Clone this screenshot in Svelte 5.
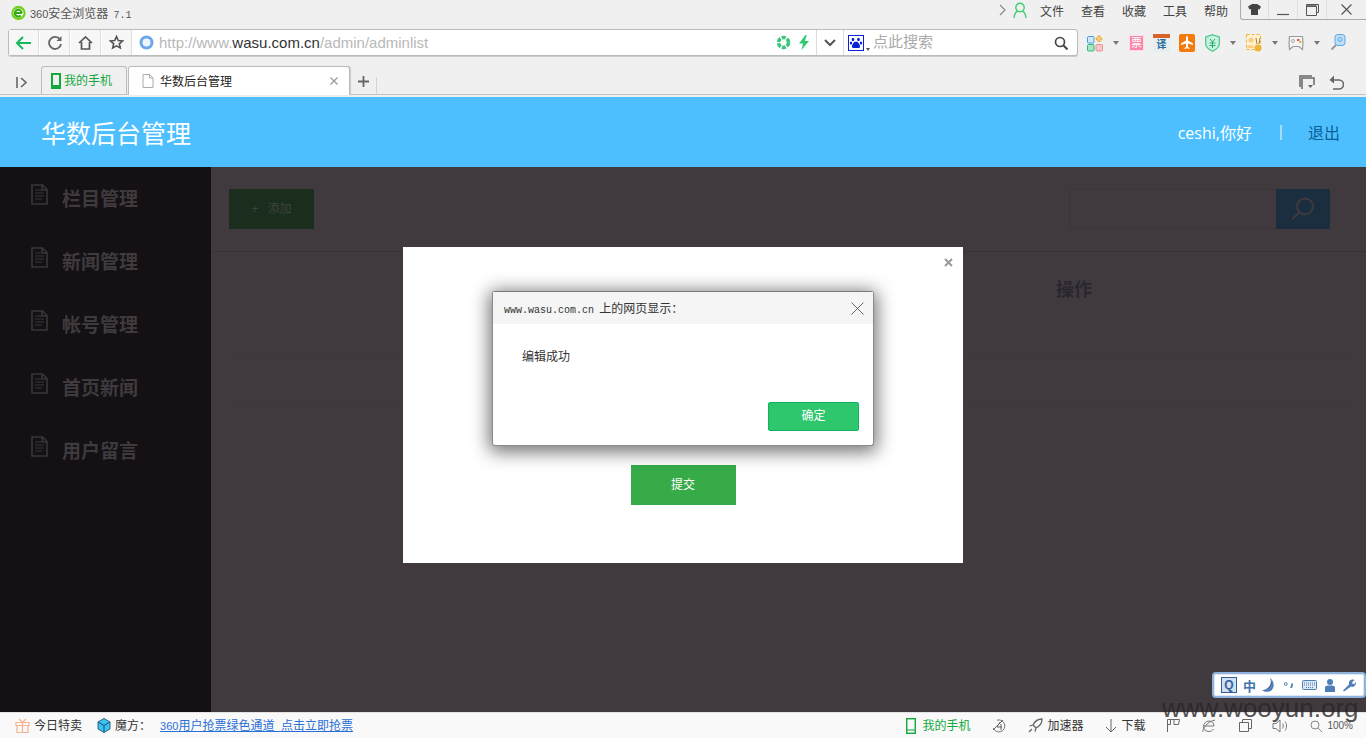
<script>
	const menus = ['文件', '查看', '收藏', '工具', '帮助'];
	const nav = ['栏目管理', '新闻管理', '帐号管理', '首页新闻', '用户留言'];
</script>

<div class="page">
	<div class="chrome">
		<div class="titlebar">
			<div class="brand">
				<svg width="15" height="16" viewBox="0 0 15 16">
					<circle cx="7.500" cy="8" r="7.200" fill="#74d01e" />
					<ellipse cx="7.500" cy="8" rx="5" ry="4.600" fill="#fff" />
					<path d="M3.800 8h7.200M10.800 8a3.500 3.300 0 1 0-1 2.500" fill="none" stroke="#35a814" stroke-width="2" />
				</svg>
				<span class="brand-name"><span class="num">360</span>安全浏览器<span class="latin ver">7.1</span></span>
			</div>
			<div class="menu">
				<svg class="more" width="7" height="12" viewBox="0 0 7 12"><path d="M1 1l5 5-5 5" fill="none" stroke="#888" stroke-width="1.200" /></svg>
				<svg class="user" width="14" height="17" viewBox="0 0 14 17">
					<circle cx="7" cy="5.500" r="4.200" fill="none" stroke="#3fcf72" stroke-width="1.400" />
					<path d="M1 16c.4-4 2.500-6.500 4-7M13 16c-.4-4-2.500-6.500-4-7" fill="none" stroke="#3fcf72" stroke-width="1.400" />
				</svg>
				{#each menus as m}
					<span class="menu-item">{m}</span>
				{/each}
				<div class="winbtns">
					<div class="wb w-shirt">
						<svg width="13" height="11" viewBox="0 0 13 11"><path d="M4 0h5l4 2.500-1.500 3L10 5v6H3V5l-1.500.5L0 2.500z" fill="#444" /></svg>
					</div>
					<div class="wb w-next"><svg width="12" height="12" viewBox="0 0 12 12"><path d="M0 10.500h12" stroke="#555" stroke-width="1.200" /></svg></div>
					<div class="wb w-next"><svg width="13" height="12" viewBox="0 0 13 12"><path d="M.5 2.500h10v9H.5zM.5 2.500V.5h12v8h-2" fill="none" stroke="#555" /><path d="M.5 2h10" stroke="#555" stroke-width="1.500" /></svg></div>
					<div class="wb w-close"><svg width="11" height="11" viewBox="0 0 11 11"><path d="M.5.500l10 10M10.500.5l-10 10" stroke="#555" stroke-width="1.200" /></svg></div>
				</div>
			</div>
		</div>

		<div class="navrow">
			<div class="addr">
				<div class="seg">
					<svg width="17" height="14" viewBox="0 0 17 14"><path d="M16 7H2M8 1L2 7l6 6" fill="none" stroke="#16b95a" stroke-width="2" /></svg>
				</div>
				<div class="seg">
					<svg width="14" height="14" viewBox="0 0 14 14"><path d="M12 3.500A6 6 0 1 0 13 8" fill="none" stroke="#666" stroke-width="1.800" /><path d="M13.500 0v5h-5z" fill="#666" /></svg>
				</div>
				<div class="seg">
					<svg width="15" height="14" viewBox="0 0 15 14"><path d="M1 7l6.500-6L14 7M3.500 6v7h8V6" fill="none" stroke="#555" stroke-width="1.700" /></svg>
				</div>
				<div class="seg">
					<svg width="15" height="15" viewBox="0 0 15 15"><path d="M7.500 1.500l1.800 4 4.300.400-3.300 2.900 1 4.200-3.800-2.200-3.800 2.200 1-4.200L1.400 5.900l4.300-.4z" fill="none" stroke="#555" stroke-width="1.600" /></svg>
				</div>
				<svg class="globe" width="15" height="15" viewBox="0 0 15 15"><circle cx="7.500" cy="7.500" r="5.500" fill="#eef6ff" stroke="#6ba8ea" stroke-width="3" /></svg>
				<div class="url">http://www.<b>wasu.com.cn</b>/admin/adminlist</div>
				<svg class="speed" width="15" height="15" viewBox="0 0 15 15"><circle cx="7.500" cy="7.500" r="5" fill="none" stroke="#3cc47c" stroke-width="3.600" stroke-dasharray="4 1.300" /></svg>
				<svg class="bolt" width="12" height="15" viewBox="0 0 12 15"><path d="M7.500 0L1 8.500h4L3.500 15 11 6H6.800L8.800 0z" fill="#2dcb6e" /></svg>
				<div class="drop">
					<svg width="12" height="8" viewBox="0 0 12 8"><path d="M1 1l5 5 5-5" fill="none" stroke="#555" stroke-width="2" /></svg>
				</div>
				<div class="paw">
					<svg width="16" height="16" viewBox="0 0 16 16">
						<rect x=".5" y=".5" width="15" height="15" fill="#fff" stroke="#0a1fd8" />
						<ellipse cx="5" cy="4.500" rx="1.300" ry="1.800" fill="#0a1fd8" />
						<ellipse cx="10.500" cy="4.500" rx="1.300" ry="1.800" fill="#0a1fd8" />
						<ellipse cx="3" cy="8" rx="1.200" ry="1.600" fill="#0a1fd8" />
						<ellipse cx="13" cy="8" rx="1.200" ry="1.600" fill="#0a1fd8" />
						<path d="M8 6.500c2 0 4.500 3.500 4 5.500-.5 1.500-2.500 1-4 1s-3.500.5-4-1c-.5-2 2-5.500 4-5.500z" fill="#0a1fd8" />
					</svg>
					<i class="caret small"></i>
				</div>
				<div class="engine">点此搜索</div>
				<svg class="find" width="14" height="14" viewBox="0 0 14 14"><circle cx="6" cy="6" r="4.500" fill="none" stroke="#444" stroke-width="1.700" /><path d="M9.500 9.500l4 4" stroke="#444" stroke-width="2" /></svg>
			</div>
			<div class="tools">
				<svg width="16" height="18" viewBox="0 0 16 18">
					<rect x=".5" y="2.500" width="6.500" height="6.500" rx="1" fill="#cfe6fb" stroke="#4a9be0" />
					<rect x=".5" y="10.500" width="6.500" height="6.500" rx="1" fill="#a5e8c6" stroke="#37b77d" />
					<rect x="9" y="10.500" width="6.500" height="6.500" rx="1" fill="#fbc8c8" stroke="#e88f8f" />
					<path d="M12 1.500v6.500M8.800 4.800h6.400" stroke="#f0a92c" stroke-width="2.800" />
					<path d="M12 2.500v4.500M9.800 4.800h4.400" stroke="#fde2ad" />
				</svg>
				<i class="caret"></i>
				<div class="ticket">票</div>
				<div class="trans"><span>译</span></div>
				<div class="plane">
					<svg width="16" height="17" viewBox="0 0 16 17"><path d="M8 2c.8 0 1 1 1 2v2.500l5 3v1.500l-5-1.500V13l1.500 1v1L8 14.300 5.500 15v-1L7 13V9.500L2 11V9.500l5-3V4c0-1 .2-2 1-2z" fill="#fff" /></svg>
				</div>
				<svg width="15" height="18" viewBox="0 0 15 18">
					<path d="M7.500.7L14.300 3v6.500c0 3.500-3.500 6.200-6.800 7.800C4.200 15.700.7 13 .7 9.500V3z" fill="#c7f2de" stroke="#45c58c" stroke-width="1.200" />
					<path d="M5 5l2.500 3L10 5M4.500 9h6M4.500 11.500h6M7.500 8v6" fill="none" stroke="#2aa76d" />
				</svg>
				<i class="caret"></i>
				<div class="photo">
					<svg width="16" height="18" viewBox="0 0 16 18">
						<rect x=".5" y=".5" width="14" height="15" fill="#fff0cf" stroke="#eeb33a" stroke-dasharray="3 2" />
						<circle cx="5" cy="6" r="2.500" fill="#f6cf82" />
						<path d="M1 14c1-4 6-4 7 0z" fill="#f6cf82" />
						<path d="M10 4l1 6M14 4l-1 6" stroke="#a9812c" />
						<circle cx="12" cy="14" r="3.500" fill="#eeb33a" />
					</svg>
				</div>
				<i class="caret"></i>
				<svg width="16" height="17" viewBox="0 0 16 17">
					<path d="M1.500 2.500h13c.6 4 .6 8 0 13l-3.500-3H5l-3.500 3c-.6-5-.6-9 0-13z" fill="#f4f4f4" stroke="#9a9a9a" stroke-width="1.200" />
					<circle cx="5" cy="7" r="1.500" fill="none" stroke="#aaa" />
					<rect x="9" y="5" width="2.500" height="2" fill="#e6584c" />
					<rect x="11" y="7" width="2.500" height="2" fill="#efb73a" />
				</svg>
				<i class="caret"></i>
				<svg width="16" height="17" viewBox="0 0 16 17">
					<rect x="5" y=".5" width="10" height="11" rx="3" fill="#bfe0fa" stroke="#5ea7e0" />
					<circle cx="10" cy="5.500" r="2" fill="none" stroke="#5ea7e0" />
					<path d="M6 11l-4.500 4.500" stroke="#9a9a9a" stroke-width="2" />
				</svg>
			</div>
		</div>

		<div class="tabrow">
			<svg class="sidebtn" width="11" height="11" viewBox="0 0 11 11"><path d="M1 0v11" stroke="#666" stroke-width="1.600" /><path d="M5 1l5 4.500L5 10" fill="none" stroke="#666" stroke-width="1.600" /></svg>
			<div class="tab phone">
				<svg width="10" height="16" viewBox="0 0 10 16"><rect x="1" y="1" width="8" height="14" fill="none" stroke="#12a83c" stroke-width="2" /><rect x="2" y="12" width="6" height="3" fill="#12a83c" /></svg>
				<span class="tab-label">我的手机</span>
			</div>
			<div class="tab current">
				<svg width="12" height="14" viewBox="0 0 12 14"><path d="M1 .5h6.500L11 4v9.500H1zM7.500.5V4H11" fill="#fff" stroke="#aaa" /></svg>
				<span class="tab-label tab-name">华数后台管理</span>
				<svg class="tab-x" width="8" height="8" viewBox="0 0 8 8"><path d="M.5.500l7 7M7.500.5l-7 7" stroke="#999" stroke-width="1.200" /></svg>
			</div>
			<svg class="newtab" width="11" height="11" viewBox="0 0 11 11"><path d="M5.500 0v11M0 5.500h11" stroke="#666" stroke-width="1.800" /></svg>
			<div class="tabend"></div>
			<div class="tab-tools">
				<svg width="16" height="15" viewBox="0 0 16 15"><path d="M1 12V1h12M3 14V3h12v7" fill="none" stroke="#666" stroke-width="1.500" /><path d="M9 10l2.500 3 2.500-3z" fill="#666" /></svg>
				<svg width="15" height="15" viewBox="0 0 15 15"><path d="M3 5h7a4 4 0 0 1 0 9H4" fill="none" stroke="#666" stroke-width="1.600" /><path d="M5 .5v8L.5 5z" fill="#666" /></svg>
			</div>
		</div>
	</div>

	<header class="top">
		<div class="logo">华数后台管理</div>
		<div class="account">
			<span class="hello">ceshi,你好</span>
			<i class="sep"></i>
			<a class="logout" href="#out">退出</a>
		</div>
	</header>

	<div class="body">
		<aside class="side">
			{#each nav as item}
				<div class="side-item">
					<svg width="17" height="21" viewBox="0 0 17 21">
						<path d="M1 1h10.500L16 5.500V20H1zM11 1v5h5" fill="none" stroke="#3a3538" stroke-width="1.600" />
						<path d="M4 6h6M4 9h9M4 12h9M4 15h7" stroke="#3a3538" stroke-width="1.200" />
					</svg>
					<span>{item}</span>
				</div>
			{/each}
		</aside>
		<main class="main">
			<div class="bar">
				<div class="add"><span class="plus">+</span><span class="add-label">添加</span></div>
				<div class="search">
					<div class="search-input"></div>
					<div class="search-btn">
						<svg width="24" height="24" viewBox="0 0 24 24"><circle cx="14" cy="9.500" r="8" fill="none" stroke="#3f3a3e" stroke-width="2" /><path d="M7.500 16L1.500 22" stroke="#3f3a3e" stroke-width="2" /></svg>
					</div>
				</div>
			</div>
			<div class="table">
				<div class="thead"><span>操作</span></div>
				<div class="row"></div>
			</div>
		</main>
	</div>

	<footer class="status">
		<div class="status-left">
			<div class="st">
				<svg width="15" height="15" viewBox="0 0 15 15"><path d="M1 4.500h13v3H1zM2 7.500h11v7H2zM7.500 4.500v10M4 1l3.500 3.500L11 1" fill="none" stroke="#f5b48f" stroke-width="1.200" /></svg>
				<span class="st-label">今日特卖</span>
			</div>
			<div class="st cube">
				<svg width="14" height="15" viewBox="0 0 14 15"><path d="M7 .5l6 3.500v7l-6 3.500L1 11V4z" fill="#3cc3f5" stroke="#33617d" /><path d="M1 4l6 3.500L13 4M7 7.500v7" fill="none" stroke="#17526f" /></svg>
				<span class="st-label">魔方：</span>
			</div>
			<a class="promo st-label" href="#promo"><span class="num">360</span>用户抢票绿色通道&nbsp;&nbsp;点击立即抢票</a>
		</div>
		<div class="status-right">
			<div class="st green">
				<svg width="10" height="16" viewBox="0 0 10 16"><rect x=".7" y=".7" width="8.600" height="14.600" fill="none" stroke="#12a83c" stroke-width="1.400" /><path d="M1 12h8" stroke="#12a83c" /></svg>
				<span class="st-label">我的手机</span>
			</div>
			<svg class="s-ac" width="14" height="14" viewBox="0 0 14 14"><path d="M5 1.200A6 6 0 1 1 1.200 9" fill="none" stroke="#777" /><path d="M1 11L11 1M8 3L5 8h5M9 5v6" fill="none" stroke="#666" /></svg>
			<div class="st s-boost">
				<svg width="15" height="15" viewBox="0 0 15 15"><path d="M14 1c-4 0-7 2-9 6l3 3c4-2 6-5 6-9zM5 7L1.500 8M8 10l-1 3.500M4 11l-3 3" fill="none" stroke="#666" stroke-width="1.300" /></svg>
				<span class="st-label">加速器</span>
			</div>
			<div class="st s-down">
				<svg width="12" height="14" viewBox="0 0 12 14"><path d="M6 0v13M1 8l5 5 5-5" fill="none" stroke="#666" /></svg>
				<span class="st-label">下载</span>
			</div>
			<svg class="s-flag" width="13" height="13" viewBox="0 0 13 13"><path d="M.5 13V.5h12l-1 5H7V.5M3.500.5v5H.5" fill="none" stroke="#666" /></svg>
			<svg class="s-e" width="14" height="14" viewBox="0 0 14 14"><path d="M2 7h10c0-3-2-5-5-5S1.500 4.500 1.500 7.500 4 12.500 7 12.500c2 0 3.500-1 4.500-2.500M1 13C0 11 4 3 13 1" fill="none" stroke="#777" /></svg>
			<svg class="s-win" width="13" height="13" viewBox="0 0 13 13"><path d="M3.500 3.500V.5h9v9h-3M.5 3.500h9v9h-9z" fill="none" stroke="#666" /></svg>
			<svg class="s-snd" width="16" height="14" viewBox="0 0 16 14"><path d="M1 4.500h3L8 1v12L4 9.500H1zM10.500 4.500c1 1.500 1 3.500 0 5M13 2.500c2 2.500 2 6.500 0 9" fill="none" stroke="#777" /></svg>
			<svg class="s-zoom" width="12" height="12" viewBox="0 0 12 12"><circle cx="5" cy="5" r="4" fill="none" stroke="#888" /><path d="M8 8l4 4" stroke="#888" /></svg>
			<span class="s-pct">100%</span>
		</div>
	</footer>

	<div class="modal">
		<svg class="modal-x" width="9" height="9" viewBox="0 0 9 9"><path d="M1 1l7 7M8 1L1 8" stroke="#999" stroke-width="2" /></svg>
		<div class="submit">提交</div>
	</div>

	<div class="alert">
		<div class="alert-head">
			<span class="alert-title"><span class="latin">www.wasu.com.cn</span> 上的网页显示：</span>
			<svg width="13" height="13" viewBox="0 0 13 13"><path d="M.5.500l12 12M12.500.5l-12 12" stroke="#666" /></svg>
		</div>
		<div class="alert-msg">编辑成功</div>
		<div class="alert-foot"><div class="ok">确定</div></div>
	</div>

	<div class="ime">
		<div class="ime-q">Q</div>
		<span class="ime-zh">中</span>
		<svg width="14" height="14" viewBox="0 0 14 14"><path d="M8 0c3 3 3 9-1 11-2 1-5 1-7 1 2 2 5 2 7 1.500 5-1 7-9 1-13.500z" fill="#4e7fb5" /><path d="M8 0c3 3 3 9-1 11-2 1-4 1.500-7 1 5 0 11-5 8-12z" fill="#3f6fa6" /></svg>
		<svg width="10" height="8" viewBox="0 0 10 8"><circle cx="1.800" cy="3" r="1.400" fill="none" stroke="#5585b8" /><path d="M8 2.500v2L7 7" fill="none" stroke="#4e7fb5" stroke-width="1.800" /></svg>
		<svg width="15" height="10" viewBox="0 0 15 10"><rect x=".5" y=".5" width="14" height="9" rx="1" fill="#dbe7f4" stroke="#4e7fb5" /><path d="M2 3h11M2 5h11M4 7.500h7" stroke="#4e7fb5" stroke-dasharray="1 1" /></svg>
		<svg width="10" height="13" viewBox="0 0 10 13"><circle cx="5" cy="3" r="3" fill="#4e7fb5" /><path d="M0 13V8.500C0 7 1.500 6.500 5 6.500s5 .5 5 2V13z" fill="#4e7fb5" /></svg>
		<svg width="13" height="13" viewBox="0 0 13 13"><path d="M1 12.500L0 11.500l6-6C5.500 3 6.500 1 9 .5c1 0 2 0 2.500.5L9 3.300l.7 1.500 1.500.5L13 3c.3 2-1 4.500-3 4.800-1 .2-1.500 0-2-.3z" fill="#4e7fb5" /></svg>
	</div>

	<div class="mark">www.wooyun.org</div>
</div>

<style>
	:global(body) {
		margin: 0;
	}

	.page {
		position: relative;
		width: 1366px;
		height: 738px;
		overflow: hidden;
		display: flex;
		flex-direction: column;
		font-family: 'Liberation Sans', 'Noto Sans CJK SC', sans-serif;
		font-size: 12px;
		color: #333;
		background: #403a3e;
	}

	/* the browser draws latin at half the width of its 12px hanzi */
	.latin {
		font-family: 'Liberation Mono', monospace;
		font-size: 10px;
	}

	.num {
		font-size: 11px;
	}

	.chrome {
		height: 97px;
		flex: none;
		background: #f0f0f0;
		display: flex;
		flex-direction: column;
	}

	.titlebar {
		height: 29px;
		display: flex;
		justify-content: space-between;
		align-items: flex-start;
	}

	.brand {
		display: flex;
		align-items: center;
		height: 26px;
		padding-left: 11px;
		color: #555;
	}

	.brand svg {
		margin-right: 4px;
	}

	.brand-name {
		margin-bottom: 2px;
	}

	.ver {
		margin-left: 5px;
	}

	.menu {
		display: flex;
		align-items: center;
		height: 20px;
	}

	.more {
		margin-right: 7px;
	}

	.user {
		margin-right: -1px;
	}

	.menu-item {
		margin-left: 14px;
		margin-right: 3px;
		width: 24px;
		color: #444;
		white-space: nowrap;
	}

	.winbtns {
		display: flex;
		height: 19px;
		margin: 0 0 0 9px;
		border-left: 1px solid #aaa;
		border-bottom: 1px solid #aaa;
		border-bottom-left-radius: 3px;
	}

	.wb {
		display: flex;
		align-items: center;
		justify-content: center;
		box-sizing: border-box;
		border-right: 1px solid #ddd;
	}

	.w-shirt {
		width: 28px;
	}

	.w-next {
		width: 29px;
	}

	.w-close {
		width: 39px;
		border-right: none;
	}

	.navrow {
		height: 27px;
		display: flex;
		align-items: center;
		padding-left: 8px;
	}

	.addr {
		width: 1070px;
		height: 27px;
		box-sizing: border-box;
		border: 1px solid #bbb;
		border-radius: 3px;
		background: #fff;
		display: flex;
		align-items: center;
		box-shadow: 0 1px 0 #ccc;
	}

	.seg {
		width: 30px;
		height: 25px;
		box-sizing: border-box;
		border-right: 1px solid #ddd;
		background: #f7f7f7;
		display: flex;
		align-items: center;
		justify-content: center;
		margin-right: 1px;
	}

	.globe {
		margin-left: 6px;
		flex: none;
	}

	.url {
		margin-left: 5px;
		width: 617px;
		flex: none;
		font-size: 15px;
		color: #b8b8b8;
		white-space: nowrap;
	}

	.url b {
		font-weight: normal;
		color: #333;
	}

	.speed {
		flex: none;
	}

	.bolt {
		flex: none;
		margin-left: 7px;
	}

	.drop {
		margin-left: 6px;
		width: 28px;
		height: 25px;
		box-sizing: border-box;
		border-left: 1px solid #ddd;
		border-right: 1px solid #ddd;
		display: flex;
		align-items: center;
		justify-content: center;
		flex: none;
	}

	.paw {
		position: relative;
		margin-left: 4px;
		display: flex;
		flex: none;
	}

	.paw .small {
		position: absolute;
		left: 18px;
		bottom: 0;
		border-width: 3px 2.500px 0;
		border-top-color: #555;
	}

	.engine {
		margin: 0 0 1px 9px;
		width: 181px;
		font-size: 15px;
		line-height: 20px;
		color: #aaa;
		flex: none;
	}

	.find {
		flex: none;
	}

	.caret {
		display: block;
		width: 0;
		height: 0;
		border-style: solid;
		border-width: 4px 3.500px 0;
		border-color: #777 transparent transparent;
	}

	.tools {
		display: flex;
		align-items: center;
		gap: 10px;
		margin-left: 9px;
	}

	.ticket {
		width: 15px;
		height: 16px;
		box-sizing: border-box;
		border: 1px solid #fde;
		background: #fb86a4;
		color: #fff;
		font-size: 11px;
		line-height: 14px;
		text-align: center;
		border-radius: 1px;
		margin-right: -1px;
	}

	.trans {
		width: 17px;
		height: 18px;
		box-sizing: border-box;
		border-top: 4px solid #d9632a;
		background: #e8edf0;
		font-size: 10px;
		line-height: 14px;
		text-align: center;
		color: #2a6c9e;
		font-weight: bold;
		margin-right: -1px;
	}

	.plane {
		width: 16px;
		height: 18px;
		background: #f57a0c;
		border-radius: 2px;
		display: flex;
		align-items: center;
		justify-content: center;
	}

	.photo {
		display: flex;
	}

	.tabrow {
		margin-top: 10px;
		height: 29px;
		display: flex;
		align-items: flex-end;
		box-sizing: border-box;
		border-bottom: 1px solid #c4c4c4;
		position: relative;
	}

	.sidebtn {
		margin: 0 14px 6px 16px;
		flex: none;
	}

	.tab {
		height: 28px;
		box-sizing: border-box;
		border: 1px solid #bbb;
		border-bottom: none;
		border-radius: 3px 3px 0 0;
		display: flex;
		align-items: center;
		flex: none;
	}

	.tab-label {
		margin-bottom: 2px;
	}

	.phone {
		width: 86px;
		padding-left: 9px;
		color: #12a83c;
		gap: 3px;
		background: #f0f0f0;
	}

	.current {
		width: 222px;
		margin-left: 1px;
		height: 29px;
		margin-bottom: -1px;
		padding-left: 13px;
		background: #fff;
		color: #222;
		box-shadow: 1px 0 1px #ccc;
	}

	.tab-name {
		margin-left: 6px;
	}

	.tab-x {
		margin-left: auto;
		margin-right: 11px;
	}

	.newtab {
		margin: 0 7px 7px 8px;
		flex: none;
	}

	.tabend {
		width: 1px;
		height: 17px;
		background: #d4d4d4;
	}

	.tab-tools {
		margin-left: auto;
		display: flex;
		gap: 14px;
		padding-right: 22px;
		margin-bottom: 4px;
	}

	.top {
		height: 70px;
		flex: none;
		background: #4dbfff;
		display: flex;
		align-items: center;
		justify-content: space-between;
		padding: 0 26px 0 41px;
	}

	.logo {
		font-size: 25px;
		color: #fff;
		font-family: 'Open Sans', 'Noto Sans CJK SC', sans-serif;
	}

	.account {
		display: flex;
		align-items: center;
		font-size: 16px;
		font-family: 'Open Sans', 'Noto Sans CJK SC', sans-serif;
	}

	.hello {
		color: #fff;
	}

	.sep {
		width: 2px;
		height: 15px;
		background: #a5dcfb;
		margin: 0 26px 0 28px;
	}

	.logout {
		color: #0a5f95;
		text-decoration: none;
	}

	.body {
		flex: 1;
		display: flex;
		min-height: 0;
	}

	.side {
		width: 211px;
		flex: none;
		background: #141014;
	}

	.side-item {
		height: 63px;
		box-sizing: border-box;
		border-bottom: 1px solid #171317;
		padding: 17px 0 0 31px;
		display: flex;
		align-items: flex-start;
		gap: 14px;
		color: #3f3a3d;
		font-size: 19px;
		line-height: 28px;
		font-weight: bold;
		font-family: 'Noto Sans CJK SC', sans-serif;
	}

	.main {
		flex: 1;
		min-width: 0;
	}

	.bar {
		height: 85px;
		box-sizing: border-box;
		padding: 22px 36px 0 18px;
		border-bottom: 1px solid #383236;
		display: flex;
		justify-content: space-between;
		align-items: flex-start;
	}

	.add {
		width: 85px;
		height: 40px;
		background: #1b2d1c;
		color: #3d433e;
		display: flex;
		align-items: center;
		justify-content: center;
	}

	.plus {
		margin-right: 9px;
	}

	.add-label {
		margin-bottom: 3px;
	}

	.search {
		display: flex;
	}

	.search-input {
		width: 207px;
		height: 40px;
		box-sizing: border-box;
		border: 1px solid #3b3539;
		border-right: none;
	}

	.search-btn {
		width: 54px;
		height: 40px;
		background: #1b2e40;
		display: flex;
		align-items: center;
		justify-content: center;
	}

	.table {
		margin: 0 13px 0 18px;
	}

	.thead {
		height: 106px;
		box-sizing: border-box;
		border-bottom: 1px solid #3e383c;
		display: flex;
		justify-content: flex-end;
		padding: 23px 261px 0 0;
		font-size: 18px;
		line-height: 26px;
		font-weight: bold;
		color: #2a2630;
		font-family: 'Noto Sans CJK SC', sans-serif;
	}

	.row {
		height: 46px;
		box-sizing: border-box;
		border-bottom: 1px solid #3e383c;
	}

	.status {
		height: 26px;
		flex: none;
		box-sizing: border-box;
		border-top: 1px solid #e2e2e2;
		background: #f9f9f9;
		display: flex;
		align-items: center;
		justify-content: space-between;
	}

	.status-left,
	.status-right {
		display: flex;
		align-items: center;
	}

	.status-left {
		padding-left: 15px;
	}

	.status-right {
		padding-right: 13px;
	}

	.st {
		display: flex;
		align-items: center;
		gap: 4px;
	}

	.st-label {
		margin-bottom: 2px;
	}

	.cube {
		margin-left: 15px;
	}

	.promo {
		margin-left: 9px;
		color: #2a6fd6;
	}

	.green {
		color: #12a83c;
		gap: 6px;
	}

	.s-ac,
	.s-boost,
	.s-down,
	.s-flag,
	.s-e,
	.s-zoom {
		margin-left: 22px;
	}

	.s-win {
		margin-left: 23px;
	}

	.s-snd {
		margin-left: 20px;
	}

	.s-pct {
		margin-left: 5px;
		font-size: 10px;
		color: #555;
	}

	.modal {
		position: absolute;
		left: 403px;
		top: 247px;
		width: 560px;
		height: 316px;
		background: #fff;
		display: flex;
		justify-content: center;
	}

	.modal-x {
		position: absolute;
		right: 10px;
		top: 11px;
	}

	.submit {
		margin-top: 218px;
		width: 105px;
		height: 40px;
		background: #36ab48;
		color: #fff;
		text-align: center;
		line-height: 40px;
	}

	.alert {
		position: absolute;
		left: 492px;
		top: 291px;
		width: 382px;
		height: 155px;
		box-sizing: border-box;
		border: 1px solid #8a8a8a;
		border-top-color: #777;
		border-radius: 3px;
		background: #fff;
		box-shadow: 0 3px 18px 3px rgba(0, 0, 0, 0.55);
		display: flex;
		flex-direction: column;
	}

	.alert-head {
		height: 32px;
		background: #f5f5f5;
		display: flex;
		align-items: center;
		justify-content: space-between;
		padding: 0 9px 0 11px;
	}

	.alert-title {
		word-spacing: 2px;
		margin-bottom: 1px;
	}

	.alert-msg {
		padding: 25px 0 0 29px;
		line-height: 17px;
		flex: 1;
	}

	.alert-foot {
		display: flex;
		justify-content: flex-end;
		padding: 0 14px 14px 0;
	}

	.ok {
		width: 91px;
		height: 29px;
		box-sizing: border-box;
		border: 1px solid #12b060;
		border-radius: 2px;
		background: #2fc76d;
		color: #fff;
		text-align: center;
		line-height: 27px;
	}

	.ime {
		position: absolute;
		left: 1212px;
		top: 672px;
		width: 154px;
		height: 26px;
		box-sizing: border-box;
		background: #fff;
		border: 2px solid #8fb3dc;
		box-shadow: inset 0 0 0 1px #dfe9f5;
		border-radius: 4px;
		display: flex;
		align-items: center;
		gap: 8px;
		padding-left: 7px;
	}

	.ime-q {
		width: 16px;
		height: 16px;
		box-sizing: border-box;
		border: 1px solid #335f94;
		background: #cfe0f2;
		color: #335f94;
		font-size: 12px;
		font-weight: bold;
		line-height: 14px;
		text-align: center;
	}

	.ime-zh {
		color: #3f74ad;
		font-size: 13px;
		font-weight: bold;
		margin: 0 -2px;
	}

	.mark {
		position: absolute;
		left: 1162px;
		top: 693px;
		font-size: 26px;
		line-height: 30px;
		color: rgba(40, 36, 40, 0.8);
		font-family: 'Liberation Sans', sans-serif;
		white-space: nowrap;
	}
</style>
